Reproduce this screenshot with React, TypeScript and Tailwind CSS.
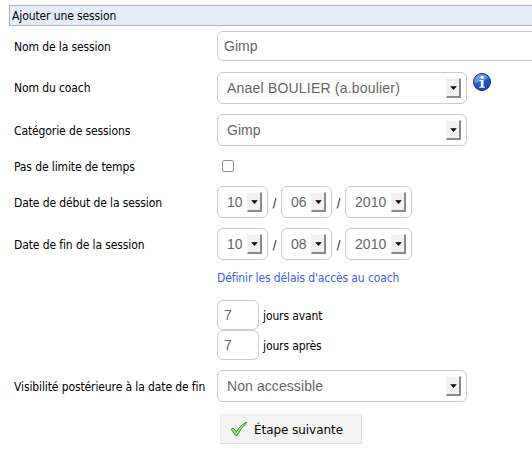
import type { ReactNode } from "react";

const box = "box-border shrink-0 rounded-[6px] border border-[#cccccc] bg-white text-[14px] text-[#666666] font-['Liberation_Sans',Arial,sans-serif]";

function Select({ value, width, tracking = "tracking-[0.05px]" }: { value: string; width: string; tracking?: string }) {
  return (
    <div className={`${box} ${width} ${tracking} flex h-8 items-center justify-between pl-[9px] pr-[5px]`}>
      <span className="whitespace-nowrap">{value}</span>
      <span className="flex h-5 w-[15px] shrink-0 items-center justify-center border-t border-l border-r-2 border-b-2 border-t-[#f8f8f8] border-l-[#f4f4f4] border-r-[#8a8a8a] border-b-[#8a8a8a] bg-[#f2f1f0]">
        <svg width="7" height="4" viewBox="0 0 7 4">
          <path d="M0.2 0.3H6.8L3.5 3.9Z" fill="#000" />
        </svg>
      </span>
    </div>
  );
}

function Row({ label, children, className, labelClass = "pt-[2px]" }: { label: string; children: ReactNode; className: string; labelClass?: string }) {
  return (
    <div className={`flex items-center ${className}`}>
      <div className={`w-[208px] shrink-0 whitespace-nowrap pl-[5px] ${labelClass}`}>{label}</div>
      {children}
    </div>
  );
}

function DateFields({ day, month, year }: { day: string; month: string; year: string }) {
  return (
    <div className="flex items-center">
      <Select value={day} width="w-[51px]" />
      <span className="w-[13px] pt-[2px] text-center">/</span>
      <Select value={month} width="w-[51px]" />
      <span className="w-[13px] pt-[2px] text-center">/</span>
      <Select value={year} width="w-[67px]" />
    </div>
  );
}

function InfoIcon() {
  return (
    <svg className="mb-3 ml-[6px] shrink-0" width="18" height="18" viewBox="0 0 18 18">
      <defs>
        <linearGradient id="info" x1="0" y1="0" x2="0.5" y2="1">
          <stop offset="0" stopColor="#76a4ef" />
          <stop offset="0.5" stopColor="#2a63cf" />
          <stop offset="1" stopColor="#1443b4" />
        </linearGradient>
      </defs>
      <circle cx="9" cy="9" r="8.5" fill="url(#info)" stroke="#0c2c93" />
      <path d="M1.5 8.5A7.5 7.5 0 0 1 15 4.5Q12 8 1.5 10Z" fill="#a5c4f8" opacity=".45" />
      <circle cx="9.2" cy="4.3" r="1.6" fill="#fff" />
      <path d="M6.4 7H10.5V13.8H12V14.8H6.2V13.8H7.8V8H6.4Z" fill="#fff" />
    </svg>
  );
}

export default function App() {
  return (
    <div className="h-[457px] w-[532px] overflow-hidden bg-white pl-[9px] pt-[5px] text-[12px] leading-4 tracking-[-0.11px] text-black font-['DejaVu_Sans_Condensed','DejaVu_Sans',sans-serif]">
      <div className="flex h-[21px] items-center border border-r-0 border-[#b3b4bb] bg-[#e5edf9] pl-[2px]">Ajouter une session</div>
      <Row label="Nom de la session" className="mt-[5px] h-[30px]">
        <div className={`${box} flex h-[30px] w-[330px] items-center pl-[6px] tracking-[0.05px]`}>Gimp</div>
      </Row>
      <Row label="Nom du coach" className="mt-[11px] h-8" labelClass="">
        <Select value="Anael BOULIER (a.boulier)" width="w-[250px]" tracking="tracking-[0.2px]" />
        <InfoIcon />
      </Row>
      <Row label="Catégorie de sessions" className="mt-[10px] h-8">
        <Select value="Gimp" width="w-[250px]" />
      </Row>
      <Row label="Pas de limite de temps" className="mt-[10px] h-5">
        <span className="ml-[5px] h-3 w-3 rounded-[2px] border border-[#a18f8f] bg-white" />
      </Row>
      <Row label="Date de début de la session" className="mt-[10px] h-8">
        <DateFields day="10" month="06" year="2010" />
      </Row>
      <Row label="Date de fin de la session" className="mt-[10px] h-8">
        <DateFields day="10" month="08" year="2010" />
      </Row>
      <div className="ml-[208px] mt-[10px] h-[30px] text-[#3d5cf5]">Définir les délais d'accès au coach</div>
      {["jours avant", "jours après"].map((text) => (
        <div key={text} className="ml-[208px] flex h-[30px] items-center gap-1">
          <div className={`${box} flex h-[30px] w-[42px] items-center pl-[6px]`}>7</div>
          <span className="pt-[2px]">{text}</span>
        </div>
      ))}
      <Row label="Visibilité postérieure à la date de fin" className="mt-[10px] h-8">
        <Select value="Non accessible" width="w-[250px]" tracking="tracking-[0.08px]" />
      </Row>
      <button className="ml-[211px] mt-3 flex h-[30px] w-[142px] items-center border border-[#dddddd] border-t-[#eeeeee] border-l-[#eeeeee] bg-[#f4f4f4] pl-[9px] text-[12px] tracking-[-0.06px] font-['DejaVu_Sans',sans-serif]">
        <svg width="18" height="16" viewBox="0 0 18 16" className="mr-[6px]">
          <path d="M1 8.3L3.2 7L6.3 10.5Q10.5 4.5 16.2 1L16.6 1.6Q11 7 7 14.6H5.8Z" fill="#8be04a" stroke="#238526" strokeWidth=".9" strokeLinejoin="round" />
          <path d="M2.7 8.5L6.4 12.5Q9.5 7 13.5 4" fill="none" stroke="#b5f084" strokeWidth="1" />
        </svg>
        <span className="pt-px">Étape suivante</span>
      </button>
    </div>
  );
}
